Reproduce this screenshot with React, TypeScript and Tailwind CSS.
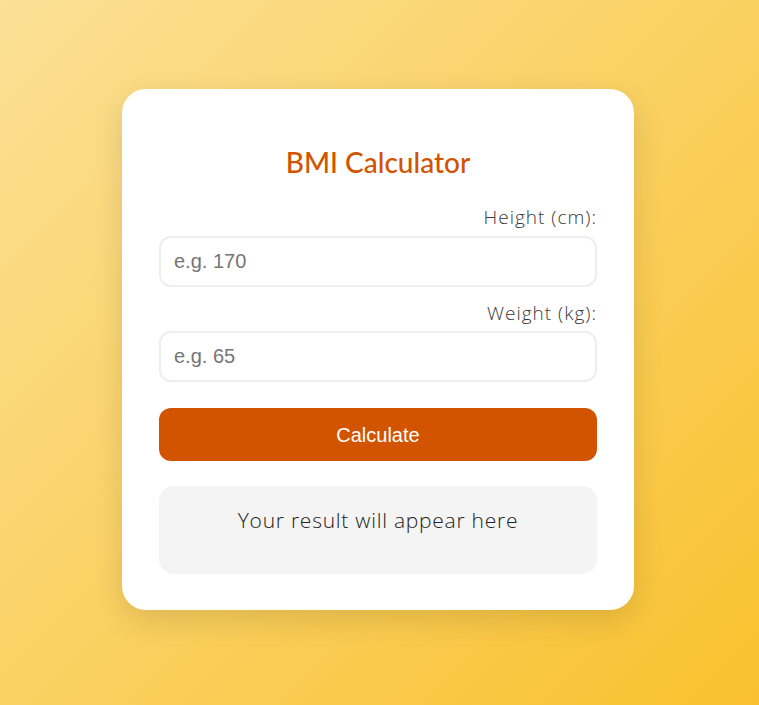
import React from "react";

export default function App() {
  return (
    <div className="min-h-[705px] w-full bg-[linear-gradient(135deg,#fbe095_0%,#f9c12e_100%)] flex justify-center pt-[89px] pr-[3px]">
      <div className="w-[512px] h-[521px] bg-white rounded-[24px] shadow-[0_10px_30px_rgba(0,0,0,0.12)] px-[37px] pt-[56px] flex flex-col font-['Lato',sans-serif]">
        <h2 className="h-[34px] leading-[34px] text-center text-[28px] text-[#d35400] font-medium">
          BMI Calculator
        </h2>
        <label className="mt-[26px] h-[24px] leading-[24px] text-right text-[19px] font-light tracking-[1px] text-[#3a3a3a] font-['Open_Sans',sans-serif]">
          Height (cm):
        </label>
        <input
          type="number"
          placeholder="e.g. 170"
          className="mt-[7px] h-[51px] w-full rounded-[12px] border-2 border-[#eeeeee] px-[13px] text-[20px] outline-none placeholder:text-[#757575] font-['Liberation_Sans',Arial,sans-serif]"
        />
        <label className="mt-[14px] h-[24px] leading-[24px] text-right text-[19px] font-light tracking-[1px] text-[#3a3a3a] font-['Open_Sans',sans-serif]">
          Weight (kg):
        </label>
        <input
          type="number"
          placeholder="e.g. 65"
          className="mt-[6px] h-[51px] w-full rounded-[12px] border-2 border-[#eeeeee] px-[13px] text-[20px] outline-none placeholder:text-[#757575] font-['Liberation_Sans',Arial,sans-serif]"
        />
        <button className="mt-[26px] h-[53px] w-full rounded-[12px] bg-[#d35400] text-white text-[20px] font-['Liberation_Sans',Arial,sans-serif]">
          Calculate
        </button>
        <div className="mt-[25px] h-[88px] rounded-[15px] bg-[#f4f4f4] pt-[20px] text-center text-[21px] font-light tracking-[0.75px] leading-[28px] text-[#222] font-['Open_Sans',sans-serif]">
          Your result will appear here
        </div>
      </div>
    </div>
  );
}
